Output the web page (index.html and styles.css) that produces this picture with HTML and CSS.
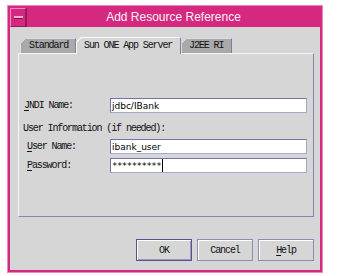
FILE: index.html
```html
<!DOCTYPE html>
<html lang="en">

<head>
    <meta charset="UTF-8">
    <title>Add Resource Reference</title>
    <link rel="stylesheet" href="styles.css">
</head>

<body>
    <div class="window">
        <div class="titlebar">
            <div class="menu-btn"><span></span></div>
            <div class="title">Add Resource Reference</div>
        </div>
        <div class="client">
            <div class="tabs">
                <span class="tab tab-std">Standard</span>
                <span class="tab tab-sun active">Sun ONE App Server</span>
                <span class="tab tab-ri">J2EE RI</span>
            </div>
            <div class="panel">
                <div class="row">
                    <label><u>J</u>NDI Name:</label>
                    <span class="field">jdbc/IBank</span>
                </div>
                <div class="info">User Information (if needed):</div>
                <div class="row sub">
                    <label><u>U</u>ser Name:</label>
                    <span class="field">ibank_user</span>
                </div>
                <div class="row sub">
                    <label><u>P</u>assword:</label>
                    <span class="field field-pw">**********<i class="caret"></i></span>
                </div>
            </div>
            <div class="buttons">
                <button class="default">OK</button>
                <button>Cancel</button>
                <button><u>H</u>elp</button>
            </div>
        </div>
    </div>
</body>

</html>
```

FILE: styles.css
```css
body {
    margin: 0;
    background-color: #fff;
    font-family: "Liberation Mono", monospace;
    font-size: 10px;
    letter-spacing: -1.1px;
    color: #111;
}

.window {
    margin: 5px 0 0 7px;
    width: 316px;
    height: 268px;
    box-sizing: border-box;
    border: 1px solid #ea86c0;
    padding: 2px;
    background-color: #d4297e;
    display: flex;
    flex-direction: column;
}

.titlebar {
    display: flex;
    height: 19px;
}

.menu-btn {
    width: 16px;
    box-sizing: border-box;
    border: 1px solid;
    border-color: #ec8cc2 #961a58 #961a58 #ec8cc2;
    display: flex;
    align-items: center;
    justify-content: center;
}

.menu-btn span {
    width: 9px;
    height: 2px;
    background-color: #f3a9d2;
    border-bottom: 1px solid #7e1448;
}

.title {
    flex: 1;
    border-left: 1px solid #961a58;
    color: #fdf0f7;
    font-family: "Liberation Sans", Arial, sans-serif;
    font-size: 12px;
    letter-spacing: 0;
    line-height: 18px;
    text-align: center;
}

.client {
    flex: 1;
    background-color: #d6d6d6;
    padding: 10px 6px 0 8px;
    display: flex;
    flex-direction: column;
}

.tabs {
    display: flex;
    align-items: flex-end;
    height: 16px;
    padding-left: 2px;
}

.tab {
    height: 15px;
    box-sizing: border-box;
    padding-left: 7px;
    line-height: 14px;
    background-color: #a9a9a9;
    border-top: 1px solid #dcdce6;
    border-left: 1px solid #dcdce6;
    border-right: 1px solid #7c7ca4;
    clip-path: polygon(5px 0, 100% 0, 100% 100%, 0 100%, 0 5px);
    background-image: linear-gradient(135deg, transparent 3.4px, #dcdce6 3.4px, #dcdce6 4.6px, transparent 4.6px);
    background-origin: border-box;
    background-size: 7px 7px;
    background-repeat: no-repeat;
}

.tab-std {
    width: 56px;
    padding-left: 8px;
}

.tab-sun {
    width: 105px;
}

.tab-ri {
    width: 51px;
}

.tab.active {
    position: relative;
    z-index: 1;
    height: 17px;
    margin-bottom: -1px;
    line-height: 15px;
    background-color: #d6d6d6;
    border-top-color: #fafafa;
    border-left-color: #fafafa;
    background-image: linear-gradient(135deg, transparent 3.4px, #fafafa 3.4px, #fafafa 4.6px, transparent 4.6px);
}

.panel {
    height: 164px;
    box-sizing: border-box;
    border: 1px solid;
    border-color: #f6f6f6 #8686b0 #8686b0 #f6f6f6;
    padding: 44px 6px 0 5px;
}

.row {
    display: flex;
    align-items: center;
    height: 15px;
}

.row + .row {
    margin-top: 4px;
}

.row label {
    width: 86px;
    box-sizing: border-box;
}

.row.sub label {
    padding-left: 3px;
}

.info {
    margin: 10px 0 4px -1px;
    line-height: 12px;
}

u {
    text-underline-offset: 2px;
}

.field {
    width: 197px;
    height: 15px;
    box-sizing: border-box;
    display: flex;
    align-items: center;
    padding-left: 1px;
    background-color: #fff;
    border: 1px solid;
    border-color: #7474a4 #a8a8c8 #a8a8c8 #7474a4;
    font-family: "DejaVu Sans", sans-serif;
    font-size: 9px;
    letter-spacing: 0;
    color: #000;
}

.field-pw {
    font-family: "DejaVu Sans Mono", monospace;
    letter-spacing: -0.5px;
}

.caret {
    width: 1px;
    height: 13px;
    margin-left: 1px;
    background-color: #000;
}

.buttons {
    display: flex;
    justify-content: flex-end;
    gap: 5px;
    margin-top: 22px;
}

button {
    width: 56px;
    height: 22px;
    padding: 0;
    background-color: #d6d6d6;
    border: 1px solid #8c8cb4;
    box-shadow: inset 1px 1px 0 #fff;
    font-family: "Liberation Mono", monospace;
    font-size: 10px;
    letter-spacing: -1.1px;
    color: #111;
}

button.default {
    border-color: #54548a;
    box-shadow: inset 1px 1px 0 #fff, inset -1px -1px 0 #9a9abc;
}
```
